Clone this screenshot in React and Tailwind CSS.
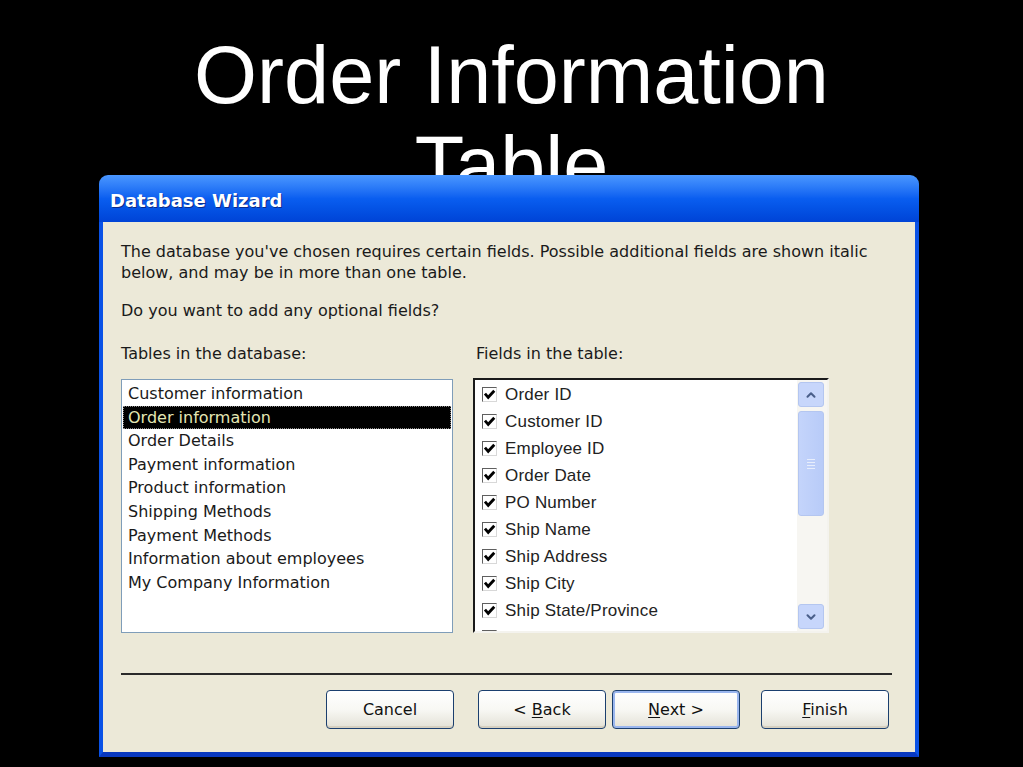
import { ChevronUp, ChevronDown } from 'lucide-react';

const tables = [
    'Customer information',
    'Order information',
    'Order Details',
    'Payment information',
    'Product information',
    'Shipping Methods',
    'Payment Methods',
    'Information about employees',
    'My Company Information'
];

const fields = [
    'Order ID',
    'Customer ID',
    'Employee ID',
    'Order Date',
    'PO Number',
    'Ship Name',
    'Ship Address',
    'Ship City',
    'Ship State/Province',
    ''
];

function CheckBox() {
    return (
        <div className="w-[15px] h-[15px] shrink-0 bg-white border border-t-[#5f5f5f] border-l-[#5f5f5f] border-b-[#d8d8d8] border-r-[#d8d8d8] flex items-center justify-center">
            <svg viewBox="0 0 12 12" className="w-[13px] h-[13px]">
                <path d="M1.8 5.2 L4.8 8.6 L10.4 2.6" fill="none" stroke="#000" strokeWidth="2.6" />
            </svg>
        </div>
    );
}

function XpButton({ children, focused }) {
    return (
        <button
            className={
                'w-[128px] h-[39px] rounded-[4px] border border-[#1b3f6e] bg-gradient-to-b from-white via-[#f8f8f4] to-[#e3e1d6] text-[16px] text-[#111] ' +
                (focused ? 'shadow-[inset_0_0_0_2px_#9ab6ee]' : 'shadow-[inset_0_-2px_0_#d6d0c0]')
            }
        >
            {children}
        </button>
    );
}

export default function App() {
    return (
        <div className="w-[1023px] h-[767px] bg-black overflow-hidden">
            {/* Slide heading */}
            <div className="h-[175px] pt-[30px]">
                <h1 className="mx-auto w-[700px] text-center text-white text-[81px] leading-[90px] font-['Liberation_Sans',Arial,sans-serif]">
                    Order Information Table
                </h1>
            </div>

            {/* Dialog */}
            <div className="relative z-10 ml-[99px] w-[820px] h-[582px] flex flex-col font-['DejaVu_Sans',Tahoma,sans-serif]">
                <div className="h-[47px] shrink-0 rounded-t-[9px] bg-gradient-to-b from-[#4a97ff] via-[#0a5ef0] to-[#0043d6] flex items-center pl-[11px] pt-[3px]">
                    <span className="text-white font-bold text-[18px] [text-shadow:1px_1px_0_#0a2a8a]">Database Wizard</span>
                </div>

                <div className="flex-1 flex flex-col border-x-[4px] border-b-[5px] border-x-[#0a52e6] border-b-[#0838c0] bg-[#ece9d8] pl-[18px] pr-[24px] text-[16px] text-[#1a1a1a]">
                    <p className="mt-[19px] leading-[21px]">
                        The database you've chosen requires certain fields. Possible additional fields are shown italic
                        <br />
                        below, and may be in more than one table.
                    </p>
                    <p className="mt-[17px] leading-[21px]">Do you want to add any optional fields?</p>

                    <div className="mt-[22px] flex leading-[21px]">
                        <span className="w-[355px]">Tables in the database:</span>
                        <span>Fields in the table:</span>
                    </div>

                    <div className="mt-[15px] flex gap-[20px] h-[254px]">
                        {/* Tables list */}
                        <div className="w-[332px] h-full bg-white border border-[#7f9db9] pt-[2px] px-px">
                            {tables.map((t, i) => (
                                <div
                                    key={t}
                                    className={
                                        'h-[23.6px] leading-[23.6px] pl-[5px] ' +
                                        (i === 1 ? 'bg-black text-[#e4e6b4] outline outline-1 outline-dotted outline-[#888] -outline-offset-1' : '')
                                    }
                                >
                                    {t}
                                </div>
                            ))}
                        </div>

                        {/* Fields list */}
                        <div className="w-[356px] h-[255px] -mt-px bg-white border-2 border-t-[#1a1a1a] border-l-[#1a1a1a] border-b-[#f4f3ee] border-r-[#f4f3ee] flex overflow-hidden">
                            <div className="flex-1 overflow-hidden pt-[1px] font-['Liberation_Sans',Arial,sans-serif] text-[17px] text-[#222]">
                                {fields.map((f, i) => (
                                    <div key={i} className="h-[27px] flex items-center pl-[7px] gap-[8px]">
                                        <CheckBox />
                                        <span className="tracking-[0.2px]">{f}</span>
                                    </div>
                                ))}
                            </div>
                            <div className="w-[30px] shrink-0 bg-[#f7f6f2] flex flex-col py-[2px] pr-[3px] pl-[1px]">
                                <div className="h-[25px] rounded-[3px] border border-[#b4c6f0] bg-[#c7d6fb] flex items-center justify-center">
                                    <ChevronUp className="w-[14px] h-[14px] text-[#4a5f8a]" strokeWidth={3.5} />
                                </div>
                                <div className="mt-[4px] h-[105px] rounded-[3px] border border-[#b4c6f0] bg-gradient-to-r from-[#c4d4fb] to-[#b8cbf8] flex flex-col items-center justify-center gap-[2px]">
                                    <div className="w-[8px] h-px bg-[#e8eefc]" />
                                    <div className="w-[8px] h-px bg-[#e8eefc]" />
                                    <div className="w-[8px] h-px bg-[#e8eefc]" />
                                    <div className="w-[8px] h-px bg-[#e8eefc]" />
                                </div>
                                <div className="flex-1" />
                                <div className="h-[25px] rounded-[3px] border border-[#b4c6f0] bg-[#c7d6fb] flex items-center justify-center">
                                    <ChevronDown className="w-[14px] h-[14px] text-[#4a5f8a]" strokeWidth={3.5} />
                                </div>
                            </div>
                        </div>
                    </div>

                    <div className="mt-[40px] h-[2px] w-[771px] bg-[#2a2a2a]" />

                    <div className="mt-[15px] flex w-[771px]">
                        <div className="ml-[205px]">
                            <XpButton>Cancel</XpButton>
                        </div>
                        <div className="ml-[24px] flex gap-[6px]">
                            <XpButton>
                                &lt; <span className="underline underline-offset-2">B</span>ack
                            </XpButton>
                            <XpButton focused>
                                <span className="underline underline-offset-2">N</span>ext &gt;
                            </XpButton>
                        </div>
                        <div className="ml-[21px]">
                            <XpButton>
                                <span className="underline underline-offset-2">F</span>inish
                            </XpButton>
                        </div>
                    </div>
                </div>
            </div>
        </div>
    );
}
